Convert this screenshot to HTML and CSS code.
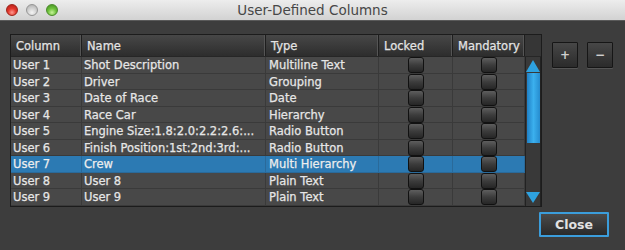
FILE: index.html
```html
<!DOCTYPE html>
<html>
<head>
<meta charset="utf-8">
<link rel="stylesheet" href="styles.css">
</head>
<body>
<div class="window">
  <div class="titlebar">
    <div class="lights">
      <span class="light red"></span>
      <span class="light gray"></span>
      <span class="light green"></span>
    </div>
    <div class="title">User-Defined Columns</div>
  </div>
  <div class="content">
    <div class="table">
      <div class="head">
        <div class="hcell">Column</div>
        <div class="hcell">Name</div>
        <div class="hcell">Type</div>
        <div class="hcell">Locked</div>
        <div class="hcell">Mandatory</div>
        <div class="hcorner"></div>
      </div>
      <div class="body">
        <div class="rows">
          <div class="row"><div class="cell">User 1</div><div class="cell">Shot Description</div><div class="cell">Multiline Text</div><div class="cell chk"><span class="cb"></span></div><div class="cell chk"><span class="cb"></span></div></div>
          <div class="row"><div class="cell">User 2</div><div class="cell">Driver</div><div class="cell">Grouping</div><div class="cell chk"><span class="cb"></span></div><div class="cell chk"><span class="cb"></span></div></div>
          <div class="row"><div class="cell">User 3</div><div class="cell">Date of Race</div><div class="cell">Date</div><div class="cell chk"><span class="cb"></span></div><div class="cell chk"><span class="cb"></span></div></div>
          <div class="row"><div class="cell">User 4</div><div class="cell">Race Car</div><div class="cell">Hierarchy</div><div class="cell chk"><span class="cb"></span></div><div class="cell chk"><span class="cb"></span></div></div>
          <div class="row"><div class="cell">User 5</div><div class="cell">Engine Size:1.8:2.0:2.2:2.6:...</div><div class="cell">Radio Button</div><div class="cell chk"><span class="cb"></span></div><div class="cell chk"><span class="cb"></span></div></div>
          <div class="row"><div class="cell">User 6</div><div class="cell">Finish Position:1st:2nd:3rd:...</div><div class="cell">Radio Button</div><div class="cell chk"><span class="cb"></span></div><div class="cell chk"><span class="cb"></span></div></div>
          <div class="row selected"><div class="cell">User 7</div><div class="cell">Crew</div><div class="cell">Multi Hierarchy</div><div class="cell chk"><span class="cb"></span></div><div class="cell chk"><span class="cb"></span></div></div>
          <div class="row"><div class="cell">User 8</div><div class="cell">User 8</div><div class="cell">Plain Text</div><div class="cell chk"><span class="cb"></span></div><div class="cell chk"><span class="cb"></span></div></div>
          <div class="row"><div class="cell">User 9</div><div class="cell">User 9</div><div class="cell">Plain Text</div><div class="cell chk"><span class="cb"></span></div><div class="cell chk"><span class="cb"></span></div></div>
        </div>
        <div class="scrollbar">
          <div class="arrow up"></div>
          <div class="thumb"></div>
          <div class="track-space"></div>
          <div class="arrow down"></div>
        </div>
      </div>
    </div>
    <div class="side">
      <button class="sq">+</button>
      <button class="sq">&minus;</button>
    </div>
  </div>
  <div class="footer">
    <button class="close">Close</button>
  </div>
</div>
</body>
</html>
```

FILE: styles.css
```css
html, body {
  margin: 0;
  padding: 0;
  background: #3d3d3d;
}

.window {
  width: 625px;
  height: 250px;
  background: #3d3d3d;
  font-family: "DejaVu Sans", Verdana, sans-serif;
  overflow: hidden;
}

.titlebar {
  height: 21px;
  box-sizing: border-box;
  border-bottom: 1px solid #5a5a5a;
  background: linear-gradient(#ededed, #d2d2d2);
  display: flex;
  align-items: center;
  position: relative;
}

.lights {
  display: flex;
  gap: 8px;
  padding-left: 6px;
}

.light {
  width: 12px;
  height: 12px;
  border-radius: 50%;
  box-sizing: border-box;
  display: block;
}

.light.red {
  background: radial-gradient(circle at 50% 75%, #ff9a90 0%, #e2362b 45%, #b01d15 100%);
  border: 1px solid #9c2218;
}

.light.gray {
  background: radial-gradient(circle at 50% 75%, #f4f4f4 0%, #d0d0d0 50%, #a9a9a9 100%);
  border: 1px solid #959595;
}

.light.green {
  background: radial-gradient(circle at 50% 75%, #c6f29a 0%, #6fc23c 45%, #3f8a1f 100%);
  border: 1px solid #4a8a2a;
}

.title {
  position: absolute;
  left: 0;
  right: 0;
  top: 0;
  line-height: 20px;
  text-align: center;
  font-family: "DejaVu Sans", Verdana, sans-serif;
  font-size: 13.5px;
  color: #474747;
  pointer-events: none;
}

.content {
  display: flex;
  padding: 13px 0 0 10px;
  gap: 10px;
}

.table {
  width: 532px;
  border: 1px solid #1c1c1c;
  box-sizing: border-box;
  background: #3f3f3f;
}

.head {
  display: grid;
  grid-template-columns: 71px 184px 113px 74px 72px 16px;
  height: 22px;
  background: linear-gradient(#474747, #2d2d2d);
  border-bottom: 1px solid #262626;
  box-sizing: border-box;
}

.hcell {
  color: #e4e4e4;
  font-size: 11.5px;
  line-height: 22px;
  padding-left: 5px;
  border-right: 1px solid #1e1e1e;
  box-shadow: inset -1px 0 0 #555;
  white-space: nowrap;
  overflow: hidden;
  -webkit-text-stroke: 0.25px #e4e4e4;
}

.hcorner {
  background: #363636;
}

.body {
  display: flex;
}

.rows {
  width: 514px;
}

.row {
  display: grid;
  grid-template-columns: 71px 184px 113px 74px 72px;
  height: 16.55px;
  background: #484848;
  border-bottom: 1px solid #3a3a3a;
  box-sizing: border-box;
}

.row.selected {
  background: #2c7ab3;
  border-bottom-color: #2a6a9a;
}

.cell {
  color: #e6e6e6;
  font-size: 11.5px;
  line-height: 17px;
  padding-left: 2px;
  border-right: 1px solid #3a3a3a;
  white-space: nowrap;
  overflow: hidden;
  -webkit-text-stroke: 0.25px #e6e6e6;
}

.row.selected .cell {
  border-right-color: #2a6a9a;
  color: #f2f2f2;
}

.cell:nth-child(3) {
  padding-left: 3px;
}

.cell.chk {
  display: flex;
  justify-content: center;
  align-items: flex-start;
  padding-left: 0;
  overflow: visible;
}

.cb {
  display: block;
  width: 16px;
  height: 16px;
  border-radius: 3px;
  box-sizing: border-box;
  border: 1px solid #111;
  background: linear-gradient(#5e5e5e, #3c3c3c 50%, #262626);
  position: relative;
  z-index: 1;
}

.scrollbar {
  width: 16px;
  height: 149px;
  box-sizing: border-box;
  border-left: 1px solid #222;
  border-right: 1px solid #222;
  background: #393939;
  display: flex;
  flex-direction: column;
  align-items: center;
  padding-top: 3px;
}

.arrow {
  width: 0;
  height: 0;
  border-left: 7px solid transparent;
  border-right: 7px solid transparent;
}

.arrow.up {
  border-bottom: 12px solid #2ea2e0;
}

.arrow.down {
  border-top: 11px solid #2ea2e0;
  margin-bottom: 3px;
}

.thumb {
  width: 13px;
  height: 70px;
  margin-top: 1px;
  background: linear-gradient(90deg, #1f80c6, #3bb0ee 50%, #268ccf);
}

.track-space {
  flex: 1;
}

.side {
  display: flex;
  gap: 9px;
  padding-top: 8px;
  align-items: flex-start;
}

.sq {
  width: 26px;
  height: 26px;
  padding: 0;
  border: 1px solid #161616;
  border-radius: 1px;
  background: linear-gradient(#474747, #2b2b2b);
  box-shadow: 0 1px 0 #555;
  color: #cfcfcf;
  font-family: "DejaVu Sans", Verdana, sans-serif;
  font-size: 12px;
  font-weight: bold;
  line-height: 24px;
}

.footer {
  display: flex;
  justify-content: flex-end;
  padding: 5px 16px 0 0;
}

.close {
  width: 70px;
  height: 25px;
  padding: 0;
  box-sizing: border-box;
  border: 2px solid #3b9ddb;
  border-radius: 1px;
  background: linear-gradient(#4a4a4a, #2a2a2a);
  color: #e2e2e2;
  font-family: "DejaVu Sans", Verdana, sans-serif;
  font-size: 12.5px;
  font-weight: bold;
}
```
